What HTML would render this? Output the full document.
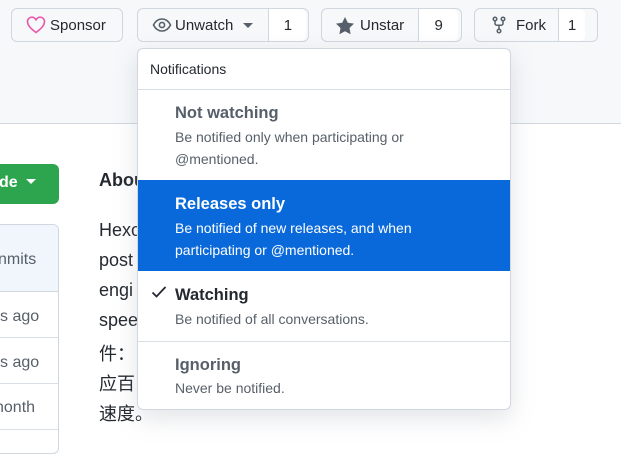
<!DOCTYPE html><html><head><style>
*{box-sizing:border-box;margin:0;padding:0}
body{width:621px;height:441px;overflow:hidden;position:relative;background:#fff;font-family:"Liberation Sans","Noto Sans CJK SC",sans-serif;color:#24292f}
.top{position:absolute;left:0;top:0;width:621px;height:124px;background:#f6f8fa;border-bottom:1px solid #d0d7de}
.btn{position:absolute;top:8px;height:34px;border:1px solid #d0d7de;border-radius:6px;background:#f6f8fa;font-size:15px;display:flex;align-items:center}
.btn .c{border-left:1px solid #d0d7de;height:100%;display:flex;align-items:center;justify-content:center;background:#fff;border-radius:0 6px 6px 0}
.abs{position:absolute}
.dd{position:absolute;left:137px;top:48px;width:374px;height:362px;background:#fff;border:1px solid #d0d7de;border-radius:6px;box-shadow:0 8px 24px rgba(140,149,159,.25);overflow:hidden}
.it{position:absolute;left:0;width:100%;border-top:1px solid #d8dee4}
.it b{position:absolute;left:37px;font-size:16.5px;font-weight:bold}
.it span{position:absolute;left:37px;font-size:14px;line-height:22px}
.p{position:absolute;left:99px;font-size:18px;color:#24292f}
</style></head><body>
<div class="top"></div>
<div class="btn" style="left:11px;width:112px;background:#f6f8fa"><svg style="margin-left:14px" width="20" height="18" viewBox="0 0 20 18"><path d="M10 16.5C4 12 1.5 9 1.5 5.5 1.5 3 3.5 1.2 5.8 1.2 7.6 1.2 9 2.3 10 3.8 11 2.3 12.4 1.2 14.2 1.2 16.5 1.2 18.5 3 18.5 5.5 18.5 9 16 12 10 16.5Z" fill="none" stroke="#e85aad" stroke-width="1.6"/></svg><span style="margin-left:4px">Sponsor</span></div>
<div class="btn" style="left:137px;width:172px"><svg style="margin-left:14px" width="20" height="16" viewBox="0 0 20 16"><path d="M1.5 8C3.5 4 6.5 2 10 2s6.5 2 8.5 6c-2 4-5 6-8.5 6S3.5 12 1.5 8Z" fill="none" stroke="#57606a" stroke-width="1.6"/><circle cx="10" cy="8" r="2.6" fill="none" stroke="#57606a" stroke-width="1.6"/></svg><span style="margin-left:3px">Unwatch</span><span style="margin-left:10px;border-left:5px solid transparent;border-right:5px solid transparent;border-top:5px solid #57606a"></span><div class="c" style="margin-left:15px;width:38px">1</div></div>
<div class="btn" style="left:321px;width:141px"><svg style="margin-left:13px" width="20" height="19" viewBox="0 0 20 19"><path d="M10 1l2.8 5.7 6.2.9-4.5 4.4 1.1 6.2L10 15.3 4.4 18.2l1.1-6.2L1 7.6l6.2-.9z" fill="#57606a"/></svg><span style="margin-left:5px">Unstar</span><div class="c" style="margin-left:14px;width:40px">9</div></div>
<div class="btn" style="left:474px;width:124px"><svg style="margin-left:17px" width="14" height="18" viewBox="0 0 14 18"><g fill="none" stroke="#57606a" stroke-width="1.5"><circle cx="3" cy="3" r="1.8"/><circle cx="11" cy="3" r="1.8"/><circle cx="7" cy="15" r="1.8"/><path d="M3 5v2.5c0 1 .8 1.8 1.8 1.8h4.4c1 0 1.8-.8 1.8-1.8V5M7 9.3v3.9"/></g></svg><span style="margin-left:10px">Fork</span><div class="c" style="margin-left:12px;width:27px">1</div></div>

<div class="abs" style="left:-10px;top:164px;width:69px;height:40px;background:#2da44e;border-radius:6px;color:#fff;font-weight:bold;font-size:16px;padding:10px 0 0 9px">de <span style="display:inline-block;margin-left:4px;vertical-align:3px;border-left:5px solid transparent;border-right:5px solid transparent;border-top:5px solid #fff"></span></div>
<div class="abs" style="left:-10px;top:224px;width:69px;height:230px;border:1px solid #d0d7de;border-radius:6px;overflow:hidden;font-size:16px;color:#57606a">
<div style="height:67px;background:#f0f6fc;border-bottom:1px solid #d0d7de;padding:26px 0 0 7px">nmits</div>
<div style="height:46px;border-bottom:1px solid #d8dee4;padding:16px 0 0 9px">s ago</div>
<div style="height:46px;border-bottom:1px solid #d8dee4;padding:16px 0 0 9px">s ago</div>
<div style="height:46px;border-bottom:1px solid #d8dee4;padding:15px 0 0 4px">nonth</div>
</div>
<div class="p" style="top:170px;font-weight:bold;font-size:18px">About</div>
<div class="p" style="top:220px">Hexo</div>
<div class="p" style="top:250px">post</div>
<div class="p" style="top:280px">engi</div>
<div class="p" style="top:310px">spee</div>
<div class="p" style="top:340px">件：</div>
<div class="p" style="top:370px">应百</div>
<div class="p" style="top:400px">速度。</div>

<div class="dd">
<div class="abs" style="left:12px;top:12px;font-size:14px">Notifications</div>
<div class="it" style="top:40px;height:91px;color:#57606a"><b style="top:14px">Not watching</b><span style="top:36px">Be notified only when participating or</span><span style="top:58px">@mentioned.</span></div>
<div class="it" style="top:131px;height:91px;background:#0969da;color:#fff;border-top:none"><b style="top:15px">Releases only</b><span style="top:37px">Be notified of new releases, and when</span><span style="top:59px">participating or @mentioned.</span></div>
<div class="it" style="top:222px;height:70px;border-top:none"><svg class="abs" style="left:13px;top:14px" width="16" height="14" viewBox="0 0 16 14"><path d="M1.5 7.5l4 4 9-9.5" fill="none" stroke="#24292f" stroke-width="1.8"/></svg><b style="top:15px;color:#24292f">Watching</b><span style="top:37px;color:#57606a">Be notified of all conversations.</span></div>
<div class="it" style="top:292px;height:70px;color:#57606a"><b style="top:14px">Ignoring</b><span style="top:35px">Never be notified.</span></div>
</div>
</body></html>
